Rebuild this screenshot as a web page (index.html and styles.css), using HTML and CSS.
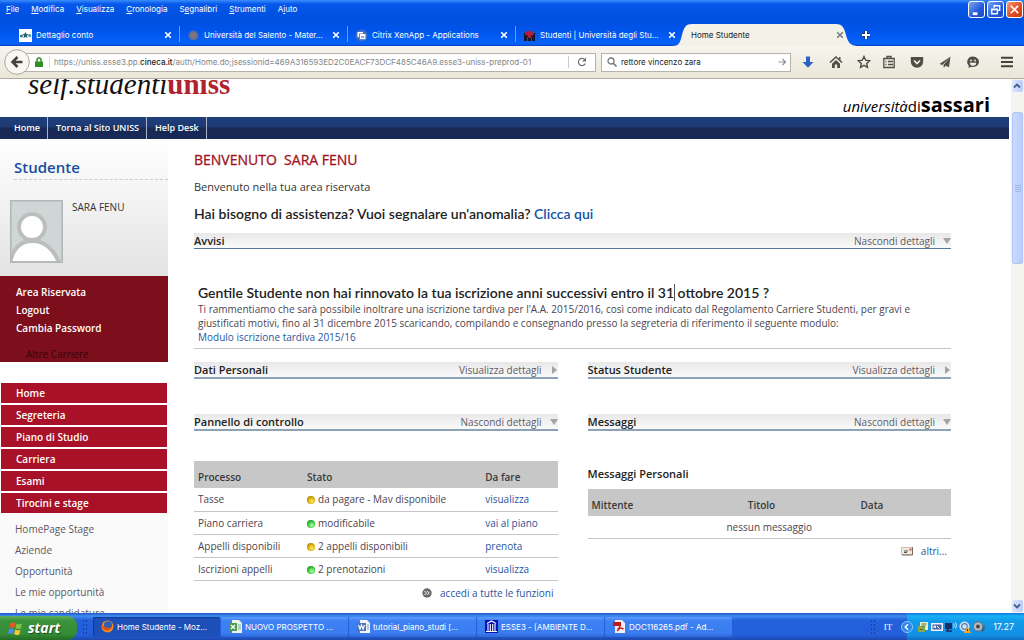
FILE: index.html
```html
<!DOCTYPE html>
<html lang="it">
<head>
<meta charset="utf-8">
<title>Home Studente</title>
<link rel="stylesheet" href="styles.css">
</head>
<body>
<header class="browser">
  <div class="menubar">
    <nav class="menus">
      <button><u>F</u>ile</button><button><u>M</u>odifica</button><button><u>V</u>isualizza</button><button><u>C</u>ronologia</button><button>S<u>e</u>gnalibri</button><button><u>S</u>trumenti</button><button>A<u>i</u>uto</button>
    </nav>
    <div class="winbtns">
      <button class="winbtn" aria-label="Riduci a icona"><svg viewBox="0 0 16 16"><path d="M4 11h5v3H4z" fill="#fff"/></svg></button>
      <button class="winbtn" aria-label="Ripristina"><svg viewBox="0 0 16 16"><path d="M6.500 6V4h6v5h-2M4 7.500h6v5H4zM4 8h6" fill="none" stroke="#fff" stroke-width="1.400"/></svg></button>
      <button class="winbtn winbtn-close" aria-label="Chiudi"><svg viewBox="0 0 16 16"><path d="M4 4l8 8M12 4l-8 8" stroke="#fff" stroke-width="1.800"/></svg></button>
    </div>
  </div>
  <div class="tabs">
    <div class="tab">
      <svg class="fav" viewBox="0 0 13 13"><path d="M0 0h13v13H0z" fill="#fff"/><circle cx="2.500" cy="7" r="1.500" fill="#378"/><path d="M6.500 3l1 2 2 .3-1.500 1.500.4 2.200-1.900-1-1.900 1 .4-2.200L3.500 5.300l2-.3z" fill="#255f78"/><circle cx="10.700" cy="6.500" r="1.500" fill="#499"/></svg>
      <span class="tab-title">Dettaglio conto</span><button class="x" aria-label="Chiudi scheda"><svg viewBox="0 0 8 8"><path d="M1.200 1.200l5.600 5.600M6.800 1.200L1.200 6.800"/></svg></button>
    </div>
    <div class="tab">
      <svg class="fav" viewBox="0 0 13 13"><circle cx="6.500" cy="6.500" r="5" fill="#5b6b9c"/><circle cx="6.500" cy="6.500" r="3.300" fill="#7f7480"/></svg>
      <span class="tab-title">Università del Salento - Mater...</span><button class="x" aria-label="Chiudi scheda"><svg viewBox="0 0 8 8"><path d="M1.200 1.200l5.600 5.600M6.800 1.200L1.200 6.800"/></svg></button>
    </div>
    <div class="tab">
      <svg class="fav" viewBox="0 0 13 13"><circle cx="6.500" cy="6.500" r="6" fill="#3f6cc4"/><path d="M2.500 3h5.500v1.500H4V8H2.500z" fill="#fff"/><path d="M4.800 5h5.700v5.200H4.800z" fill="#fff"/><path d="M6 7h3.300v2H6z" fill="#8fb0e8"/></svg>
      <span class="tab-title">Citrix XenApp - Applications</span><button class="x" aria-label="Chiudi scheda"><svg viewBox="0 0 8 8"><path d="M1.200 1.200l5.600 5.600M6.800 1.200L1.200 6.800"/></svg></button>
    </div>
    <div class="tab">
      <svg class="fav" viewBox="0 0 13 13"><path d="M1 4h11v8H1z" fill="#14172c"/><path d="M2 4l2-2 1 1 1.500-3L8 3l1-1 2 2-1 3-1.500-1-1 3h-2l-1-3L3 7z" fill="#b02038"/><path d="M4 8h1v4H4zM8 8h1v4H8z" fill="#424a70"/></svg>
      <span class="tab-title">Studenti | Università degli Stu...</span><button class="x" aria-label="Chiudi scheda"><svg viewBox="0 0 8 8"><path d="M1.200 1.200l5.600 5.600M6.800 1.200L1.200 6.800"/></svg></button>
    </div>
    <div class="tab tab-active">
      <svg class="tab-shape" viewBox="0 0 190 22" preserveAspectRatio="none"><path d="M0 22C7 22 8 19 10 11S14 0 20 0H164C171 0 172 4 174 11S178 22 186 22z" fill="#f3f1e8"/></svg>
      <span class="tab-title">Home Studente</span><button class="x" aria-label="Chiudi scheda"><svg viewBox="0 0 8 8"><path d="M1.200 1.200l5.600 5.600M6.800 1.200L1.200 6.800"/></svg></button>
    </div>
    <button class="newtab" aria-label="Nuova scheda"><svg viewBox="0 0 10 10"><path d="M5 1v8M1 5h8" stroke="#234" stroke-width="3.500"/><path d="M5 1v8M1 5h8" stroke="#fff" stroke-width="2"/></svg></button>
  </div>
  <div class="toolbar">
    <button class="back" aria-label="Indietro"><svg viewBox="0 0 26 26"><circle cx="13" cy="13" r="12.300" fill="#f8f7f2" stroke="#a9a79b"/><path d="M18.500 13H9M13.500 8L8.500 13l5 5" fill="none" stroke="#45443c" stroke-width="2.600"/></svg></button>
    <div class="urlbar">
      <svg class="lock" viewBox="0 0 8 10"><path d="M2 5V3a2 2 0 0 1 4 0v2" fill="none" stroke="#2f8f22" stroke-width="1.500"/><path d="M0 4.500h8V10H0z" fill="#2f8f22"/></svg>
      <div class="url" role="textbox" contenteditable="true" spellcheck="false" aria-label="Indirizzo">https://uniss.esse3.pp.<b>cineca.it</b>/auth/Home.do;jsessionid=469A316593ED2C0EACF73DCF485C46A9.esse3-uniss-preprod-01</div>
      <button class="reload" aria-label="Ricarica"><svg viewBox="0 0 10 10"><path d="M8.300 6.500A3.600 3.600 0 1 1 7.800 2.600" fill="none" stroke="#6e6e6e" stroke-width="1.200"/><path d="M9 .5v4H5z" fill="#6e6e6e"/></svg></button>
    </div>
    <label class="search">
      <svg viewBox="0 0 10 10"><circle cx="4" cy="4" r="3" fill="none" stroke="#777" stroke-width="1.300"/><path d="M6.200 6.200L9.500 9.500" stroke="#777" stroke-width="1.600"/></svg>
      <input type="text" value="rettore vincenzo zara" aria-label="Cerca">
      <svg viewBox="0 0 10 10"><path d="M1.500 5h7M5.500 2l3 3-3 3" fill="none" stroke="#8a93a5" stroke-width="1.200"/></svg>
    </label>
    <div class="tools">
      <button class="tool" aria-label="Download"><svg viewBox="0 0 14 14"><path d="M5 1.500h4V7h3.500L7 12.700 1.500 7H5z" fill="#2f62c8"/></svg></button>
      <button class="tool" aria-label="Pagina iniziale"><svg viewBox="0 0 14 14"><path d="M1 7.500l6-5.500 6 5.500" fill="none" stroke="#504f46" stroke-width="1.500"/><path d="M3 8.800l4-3.700 4 3.700V13H8.200V9.500H5.800V13H3zM10 2h1.500v3L10 4z" fill="#504f46"/></svg></button>
      <button class="tool" aria-label="Aggiungi ai segnalibri"><svg viewBox="0 0 14 14"><path d="M7 1.500l1.700 3.700 4 .5-3 2.700.8 4L7 10.400l-3.500 2 .8-4-3-2.700 4-.5z" fill="none" stroke="#504f46" stroke-width="1.400"/></svg></button>
      <button class="tool tool-split" aria-label="Segnalibri"><svg viewBox="0 0 14 14"><path d="M1.800 3.500h10.400v9H1.800zM5 3.500v-2h4v2M3.500 6.500h1M6 6.500h5M3.500 9.500h1M6 9.500h5" fill="none" stroke="#504f46" stroke-width="1.300"/></svg></button>
      <button class="tool" aria-label="Pocket"><svg viewBox="0 0 14 14"><path d="M.8 2h12.400v4.500a6.200 6.200 0 0 1-12.400 0z" fill="#504f46"/><path d="M4 5.500l3 3 3-3" fill="none" stroke="#f2f0e6" stroke-width="1.600"/></svg></button>
      <button class="tool" aria-label="Condividi"><svg viewBox="0 0 14 14"><path d="M12.500 1.500L1.500 9l3 1zM12.500 1.500L5.500 10l.3 3 1.700-2.200 3.500 1.400z" fill="#504f46"/></svg></button>
      <button class="tool" aria-label="Hello"><svg viewBox="0 0 14 14"><path d="M7 1.500a6 5.300 0 1 1-2 10.300L2.500 13l.3-2.300A5.400 5.400 0 0 1 7 1.500z" fill="#504f46"/><circle cx="5" cy="5.500" r=".9" fill="#eee"/><circle cx="9" cy="5.500" r=".9" fill="#eee"/><path d="M3.800 7.800h6.400a3.200 3 0 0 1-6.400 0z" fill="#eee"/></svg></button>
      <button class="tool tool-menu" aria-label="Menu"><svg viewBox="0 0 14 14"><path d="M1 2.800h12M1 7h12M1 11.200h12" stroke="#45443c" stroke-width="2"/></svg></button>
    </div>
  </div>
</header>

<div class="viewport">
  <div class="page">
    <div class="banner">
      <div class="logo">self.studenti<b>uniss</b></div>
      <div class="uni"><i>università</i>di<b>sassari</b></div>
    </div>
    <nav class="topnav"><a href="#">Home</a><a href="#">Torna al Sito UNISS</a><a href="#">Help Desk</a></nav>
    <div class="columns">
      <aside class="sidebar">
        <section class="profile">
          <h2>Studente</h2>
          <div class="who">
            <svg class="avatar" viewBox="0 0 53 63"><path d="M0 0h53v63H0z" fill="#d0d5d6"/><circle cx="22" cy="27" r="13" fill="#fff" stroke="#bcbebe" stroke-width="4"/><path d="M0 63C3 47 12 41 23 41s21 8 26 22z" fill="#fff" stroke="#bcbebe" stroke-width="4"/><path d="M.8.800h51.400v61.400H.8z" fill="none" stroke="#b4b7b7" stroke-width="1.600"/></svg>
            <span>SARA FENU</span>
          </div>
        </section>
        <nav class="account"><a href="#">Area Riservata</a><a href="#">Logout</a><a href="#">Cambia Password</a><a class="career" href="#">Altre Carriere</a></nav>
        <nav class="sections"><a href="#">Home</a><a href="#">Segreteria</a><a href="#">Piano di Studio</a><a href="#">Carriera</a><a href="#">Esami</a><a href="#">Tirocini e stage</a></nav>
        <nav class="sub"><a href="#">HomePage Stage</a><a href="#">Aziende</a><a href="#">Opportunità</a><a href="#">Le mie opportunità</a><a href="#">Le mie candidature</a></nav>
      </aside>
      <main class="main">
        <h1>BENVENUTO&nbsp; SARA FENU</h1>
        <p class="welcome">Benvenuto nella tua area riservata</p>
        <p class="help">Hai bisogno di assistenza? Vuoi segnalare un'anomalia? <a href="#">Clicca qui</a></p>
        <div class="bar bar-thin"><h3>Avvisi</h3><a href="#">Nascondi dettagli <svg viewBox="0 0 8 8"><path d="M0 1h8L4 7z"/></svg></a></div>
        <article class="notice">
          <h4>Gentile Studente non hai rinnovato la tua iscrizione anni successivi entro il 31<span class="caret"></span> ottobre 2015 ?</h4>
          <p>Ti rammentiamo che sarà possibile inoltrare una iscrizione tardiva per l'A.A. 2015/2016, così come indicato dal Regolamento Carriere Studenti, per gravi e giustificati motivi, fino al 31 dicembre 2015 scaricando, compilando e consegnando presso la segreteria di riferimento il seguente modulo:</p>
          <a href="#">Modulo iscrizione tardiva 2015/16</a>
        </article>
        <div class="panels">
          <section>
            <div class="bar"><h3>Dati Personali</h3><a href="#">Visualizza dettagli <svg viewBox="0 0 8 8"><path d="M2 0v8l5-4z"/></svg></a></div>
            <div class="bar"><h3>Pannello di controllo</h3><a href="#">Nascondi dettagli <svg viewBox="0 0 8 8"><path d="M0 1h8L4 7z"/></svg></a></div>
            <table class="grid process">
              <thead><tr><th>Processo</th><th>Stato</th><th>Da fare</th></tr></thead>
              <tbody>
                <tr><td>Tasse</td><td><i class="dot amber"></i>da pagare - Mav disponibile</td><td><a href="#">visualizza</a></td></tr>
                <tr><td>Piano carriera</td><td><i class="dot green"></i>modificabile</td><td><a href="#">vai al piano</a></td></tr>
                <tr><td>Appelli disponibili</td><td><i class="dot amber"></i>2 appelli disponibili</td><td><a href="#">prenota</a></td></tr>
                <tr><td>Iscrizioni appelli</td><td><i class="dot green"></i>2 prenotazioni</td><td><a href="#">visualizza</a></td></tr>
              </tbody>
            </table>
            <div class="more"><svg viewBox="0 0 10 10"><circle cx="5" cy="5" r="4.700" fill="#6b6b6b"/><path d="M2.500 3L4.500 5l-2 2M5.200 3l2 2-2 2" fill="none" stroke="#fff"/></svg><a href="#">accedi a tutte le funzioni</a></div>
          </section>
          <section>
            <div class="bar"><h3>Status Studente</h3><a href="#">Visualizza dettagli <svg viewBox="0 0 8 8"><path d="M2 0v8l5-4z"/></svg></a></div>
            <div class="bar"><h3>Messaggi</h3><a href="#">Nascondi dettagli <svg viewBox="0 0 8 8"><path d="M0 1h8L4 7z"/></svg></a></div>
            <h3 class="subtitle">Messaggi Personali</h3>
            <table class="grid messages">
              <thead><tr><th>Mittente</th><th>Titolo</th><th>Data</th></tr></thead>
              <tbody><tr><td colspan="3" class="empty">nessun messaggio</td></tr></tbody>
            </table>
            <div class="more"><svg class="mail" viewBox="0 0 12 10"><path d="M.5 1.500h11v7H.5z" fill="#efe9df" stroke="#c9c0b2"/><path d="M11.500 1v8H1" fill="none" stroke="#7a6a60"/><path d="M3 5h4M3 6.500h3" stroke="#555"/><path d="M8.500 2.500h2v2h-2z" fill="#c45a4a"/></svg><a href="#">altri...</a></div>
          </section>
        </div>
      </main>
    </div>
  </div>
  <div class="scroll">
    <button aria-label="Su"><svg viewBox="0 0 10 10"><path d="M2 6.500l3-3 3 3" fill="none" stroke="#42608f" stroke-width="1.800"/></svg></button>
    <div class="track"><div class="thumb"><svg viewBox="0 0 6 7"><path d="M0 .5h6M0 2.500h6M0 4.500h6M0 6.500h6" stroke="#9db6ec"/></svg></div></div>
    <button aria-label="Giù"><svg viewBox="0 0 10 10"><path d="M2 3.500l3 3 3-3" fill="none" stroke="#42608f" stroke-width="1.800"/></svg></button>
  </div>
</div>

<footer class="taskbar">
  <button class="start"><svg viewBox="0 0 16 15"><path d="M2.500 2.500C4.500 1 6 1.500 7.500 2.200L6.300 7C5 6 3.300 6 1.300 7z" fill="#e8582a"/><path d="M8.500 2.600c2 1 3.500.8 5.500-.1L12.800 7.500c-2 .9-3.600.6-5.300-.3z" fill="#7fc142"/><path d="M1 8.200c2-1 3.600-.8 5.200.1L5 13c-1.500-1-3.200-1-5 0z" fill="#4a8df0"/><path d="M7.200 8.500c1.600 1 3.300 1 5.300.2l-1.200 4.700c-2 1-3.600.6-5.200-.3z" fill="#f8c832"/></svg>start</button>
  <span class="grip"></span>
  <button class="task task-active"><svg viewBox="0 0 13 13"><circle cx="6.500" cy="6.500" r="6" fill="#f08a1c"/><circle cx="7" cy="5.200" r="4" fill="#2b5fb5"/><path d="M1 4c1 3 3 2.500 5 3.500s3 0 4-1c0 3-2 4-4 4S1 9 1 4z" fill="#e0501a"/></svg><span>Home Studente - Moz...</span></button>
  <button class="task"><svg viewBox="0 0 13 13"><path d="M3 0h7l3 3v10H3z" fill="#eef3ee"/><path d="M0 3h8v8H0z" fill="#4a9a50"/><path d="M2 5l4 4M6 5L2 9" stroke="#fff" stroke-width="1.300"/><path d="M9 5h3M9 7h3M9 9h3" stroke="#7a9"/></svg><span>NUOVO PROSPETTO ...</span></button>
  <button class="task"><svg viewBox="0 0 13 13"><path d="M3 0h7l3 3v10H3z" fill="#f4f6fb"/><path d="M0 3h9v8H0z" fill="#4a72b8"/><path d="M1.500 5l1.500 4 1.500-4L6 9l1.500-4" fill="none" stroke="#fff" stroke-width="1.200"/><path d="M10 5h2M10 7h2M10 9h2" stroke="#79b"/></svg><span>tutorial_piano_studi [...</span></button>
  <button class="task"><svg viewBox="0 0 13 13"><path d="M0 0h13v13H0z" fill="#0510b8"/><path d="M2 3.500L6.500 1 11 3.500M1 11.500h11M3 4v7M5.300 4v7M7.700 4v7M10 4v7" fill="none" stroke="#fff" stroke-width="1.100"/></svg><span>ESSE3 - [AMBIENTE D...</span></button>
  <button class="task"><svg viewBox="0 0 13 13"><path d="M2 0h7l3 3v10H2z" fill="#f6efef"/><path d="M0 2h8v4H0z" fill="#c21a1a"/><path d="M4 11c3-2 3-5 2.500-6.500M4.500 9c2-1.500 4-1 6 0" fill="none" stroke="#c21a1a" stroke-width="1.500"/></svg><span>DOC116265.pdf - Ad...</span></button>
  <span class="grip grip-end"></span>
  <span class="lang">IT</span>
  <div class="tray">
    <button class="expand" aria-label="Mostra icone nascoste"><svg viewBox="0 0 12 12"><circle cx="6" cy="6" r="5.500" fill="#2c86ea" stroke="#8cc8ff"/><path d="M7 3.200L4.300 6 7 8.800" fill="none" stroke="#fff" stroke-width="1.500"/></svg></button>
    <svg viewBox="0 0 12 12"><path d="M3 1h8v8H3z" fill="#e7edc4"/><path d="M1 5h7v6H1z" fill="#8ba94c"/><path d="M4.500 3h5M4.500 5h4M2.500 8.500h4" stroke="#58783c"/></svg>
    <svg viewBox="0 0 12 12"><path d="M0 2h12v8H0z" fill="#eef2fa"/><path d="M1.500 3.500h9v5h-9z" fill="#4b669e"/><path d="M3 7V5h1.500v2M6 5l2.500 2.500" fill="none" stroke="#fff"/></svg>
    <svg viewBox="0 0 12 12"><path d="M0 2h7v6H0z" fill="#1b2d66"/><path d="M1 10h6M3 8v2" stroke="#1b2d66" stroke-width="1.500"/><path d="M8.500 2.500q1.500 2 0 4M10.500 1.500q2 3 0 6" fill="none" stroke="#c9e4ff"/></svg>
    <svg viewBox="0 0 12 12"><circle cx="5.500" cy="5.500" r="5" fill="#cfe3f6"/><circle cx="5.500" cy="5.500" r="2.800" fill="none" stroke="#4e7fae" stroke-width="1.200"/><path d="M8.500 5.500L12 12H5z" fill="#f6a81c"/><path d="M8.500 8v2" stroke="#503000"/></svg>
    <svg viewBox="0 0 12 12"><circle cx="5" cy="5.500" r="4.600" fill="#b9bcc2" stroke="#666b75"/><circle cx="5" cy="5.500" r="2" fill="#42464f"/><path d="M9 10.500q2.500-2 2-6" fill="none" stroke="#505560" stroke-width="1.300"/></svg>
    <time>17.27</time>
  </div>
</footer>
</body>
</html>
```
FILE: styles.css
```css
* { box-sizing: border-box; }
html, body { height: 100%; }
body {
  margin: 0;
  display: flex;
  flex-direction: column;
  height: 100vh;
  overflow: hidden;
  background: #fff;
  font: 10px/14px "Open Sans", "Noto Sans", sans-serif;
  color: #4c4450;
}
h1, h2, h3, h4, p { margin: 0; }
a { text-decoration: none; color: #2a559f; }
button { border: 0; padding: 0; margin: 0; background: none; color: inherit; font: inherit; }
svg { display: block; flex: none; }

/* browser chrome */
.browser, .taskbar { font-family: Inter, "Noto Sans", sans-serif; font-size: 8px; line-height: 12px; }
.browser {
  flex: none;
  color: #fff;
  background: linear-gradient(#3a8cff, #0558ea 4px, #0050e0 20px, #0054ea 30px, #0663fb 44px, #0a3fb8 46px);
}
.menubar { display: flex; justify-content: space-between; height: 24px; padding: 1px 1px 0 6px; }
.menus { display: flex; gap: 12px; padding-top: 1px; height: 14px; }
.winbtns { display: flex; gap: 2px; }
.winbtn {
  width: 17px; height: 17px;
  border: 1px solid #fff; border-radius: 3px;
  background: linear-gradient(135deg, #7da6f5, #2358d8 60%, #1c4cc4);
}
.winbtn-close { background: linear-gradient(135deg, #f09a7a, #dd4a22 60%, #c43a12); }
.tabs { display: flex; height: 22px; padding-left: 12px; align-items: stretch; }
.tab {
  position: relative;
  flex: 0 1 168px;
  display: flex;
  align-items: center;
  gap: 4px;
  padding: 0 8px 0 7px;
  min-width: 0;
}
.tab:not(.tab-active)::after { content: ""; position: absolute; right: 0; top: 2px; bottom: 4px; border-right: 1px solid #5c9bff; }
.tab:nth-child(4)::after { display: none; }
.fav { width: 13px; height: 13px; }
.tab-title { flex: 1; white-space: nowrap; overflow: hidden; position: relative; }
.x { width: 8px; height: 8px; position: relative; }
.x svg { width: 8px; height: 8px; fill: none; stroke: #fff; stroke-width: 1.6px; }
.tab-active { color: #222; }
.tab-active .x svg { stroke: #7b7b7b; }
.tab-shape { position: absolute; left: -12px; top: 0; width: calc(100% + 22px); height: 100%; }
.newtab { margin-left: 9px; }
.newtab svg { width: 10px; height: 10px; }
.toolbar {
  display: flex;
  align-items: center;
  height: 33px;
  padding: 0 10px 0 4px;
  background: linear-gradient(#f6f5ef, #eae7d8);
  border-bottom: 1px solid #b1ae9f;
  color: #222;
}
.back { width: 26px; height: 26px; z-index: 1; }
.back svg { width: 26px; height: 26px; }
.urlbar, .search { display: flex; align-items: center; height: 19px; background: #fff; border: 1px solid #b5b3a8; }
.urlbar { flex: 575 1 0; min-width: 0; margin-left: -6px; padding-left: 10px; }
.lock { width: 8px; height: 10px; }
.url { flex: 1; min-width: 0; margin-left: 6px; padding-left: 4px; border-left: 1px solid #ddd; white-space: nowrap; overflow: hidden; color: #858585; }
.url b { color: #222; font-weight: 500; }
.reload { padding: 1px 8px; border-left: 1px solid #ccc; }
.reload svg, .search svg { width: 10px; height: 10px; }
.search { flex: 185 1 0; min-width: 0; margin-left: 5px; padding: 0 3px 0 5px; gap: 4px; }
.search input { flex: 1; min-width: 0; border: 0; padding: 0; background: none; font: inherit; color: #222; outline: 0; }
.tools { display: flex; align-items: center; gap: 14px; margin-left: 10px; }
.tool { width: 14px; height: 14px; }
.tool svg { width: 14px; height: 14px; }
.tool-split { margin-left: -3px; }
.tool-menu { margin-left: 6px; }

/* page area */
.viewport { flex: 1; min-height: 0; display: flex; }
.page { flex: 1; min-width: 0; overflow: hidden; }
.banner { display: flex; justify-content: space-between; align-items: flex-end; height: 38px; padding: 0 21px 0 28px; overflow: hidden; color: #111; }
.logo { font: italic 29px/32px "Liberation Serif", serif; padding-bottom: 17px; white-space: nowrap; }
.logo b { font-style: normal; color: #b0222e; }
.uni { font-size: 15px; line-height: 22px; white-space: nowrap; color: #000; }
.uni b { font-size: 20px; }
.topnav {
  display: flex;
  height: 22px;
  margin-right: 2px;
  background: linear-gradient(#1f3f7c, #1c3971 45%, #172954 50%, #172954);
  font-size: 9px; font-weight: 600; line-height: 22px;
}
.topnav a { color: #fff; padding: 0 7px 0 8px; border-right: 1px solid #aab3c8; }
.topnav a:first-child { padding-left: 14px; }
.columns { display: flex; align-items: flex-start; }
.sidebar { flex: none; width: 168px; font-weight: 600; }
.profile { height: 137px; padding: 17px 0 0 14px; background: linear-gradient(#fff, #e3e3e3); }
.profile h2 { font-size: 15px; line-height: 22px; font-weight: 600; color: #164ea0; padding-bottom: 1px; border-bottom: 1px dashed #ccc; }
.who { display: flex; gap: 9px; margin: 20px 0 0 -4px; font-weight: 400; color: #333; }
.avatar { width: 53px; height: 63px; }
.account { display: flex; flex-direction: column; gap: 4px; height: 86px; padding: 9px 16px 0; background: #7d0e1b; overflow: hidden; }
.account a { color: #fff; }
.account .career { margin: 8px 0 0 10px; color: #3a0509; font-weight: 400; }
.sections { display: flex; flex-direction: column; gap: 2px; margin-top: 21px; padding: 0 1px; }
.sections a { color: #fff; background: #a81127; line-height: 20px; padding-left: 15px; }
.sub { display: flex; flex-direction: column; background: #fafafa; padding: 6px 15px; }
.sub a { color: #5a5664; font-weight: 400; line-height: 21px; }
.main { flex: 1; min-width: 0; padding: 12px 60px 0 26px; }
.main h1 { font-size: 14px; line-height: 18px; font-weight: 400; color: #a01022; white-space: nowrap; -webkit-text-stroke: 0.3px; }
.welcome { font-size: 11px; line-height: 16px; margin-top: 10px; color: #333; }
.help, .notice h4 { font-family: Lato, "Open Sans", sans-serif; font-size: 14px; line-height: 18px; font-weight: 600; color: #222; }
.help { margin-top: 10px; }
.help a { color: #0f55a8; }
.bar {
  display: flex;
  justify-content: space-between;
  align-items: center;
  height: 17px;
  background: linear-gradient(#e8e8e8, #fafafa);
  border-bottom: 2px solid #8ea2b5;
}
.bar h3, .subtitle { font-size: 11px; line-height: 15px; font-weight: 600; color: #222; }
.bar a { display: flex; align-items: center; gap: 8px; color: #5f5a64; }
.bar svg { width: 8px; height: 8px; fill: #a3a3a3; }
.bar-thin { height: 16px; margin-top: 10px; border-bottom: 1px solid #55749a; }
.notice { margin-top: 35px; padding: 0 4px 4px; border-bottom: 1px solid #c4c4c8; }
.caret { position: relative; }
.caret::after { content: ""; position: absolute; left: 0; top: 0; height: 17px; border-left: 1px solid #555; }
.panels { display: grid; grid-template-columns: 1fr 1fr; gap: 30px; margin-top: 13px; }
.panels .bar + .bar { margin-top: 35px; }
.grid { width: 100%; border-collapse: collapse; table-layout: fixed; }
.grid th { height: 27px; padding: 4px 4px 0; text-align: left; background: #c7c7c7; color: #3a3a3a; font-weight: 600; }
.grid td { height: 23px; padding: 0 4px; border-bottom: 1px solid #c4c4c8; }
.process { margin-top: 30px; }
.process th:first-child { width: 30%; }
.process th:last-child { width: 21%; }
.dot { display: inline-block; width: 8px; height: 8px; margin-right: 3px; border-radius: 50%; vertical-align: -1px; }
.amber { background: radial-gradient(circle at 60% 65%, #ffe870, #d6a800 55%, #6b5000); }
.green { background: radial-gradient(circle at 60% 65%, #b6ffb0, #2fc030 55%, #0f6010); }
.more { display: flex; justify-content: flex-end; align-items: center; gap: 8px; margin-top: 5px; padding-right: 4px; }
.more svg { width: 10px; height: 10px; }
.more .mail { width: 12px; }
.subtitle { margin: 35px 0 8px; }
.messages th:first-child { width: 43%; }
.messages th:last-child { width: 26%; }
.grid .empty { height: 22px; text-align: center; }

/* scrollbar */
.scroll { flex: none; width: 13px; display: flex; flex-direction: column; padding: 1px 1px; background: #f5f4ee; }
.scroll button { height: 12px; border-radius: 2px; background: linear-gradient(90deg, #dce6ff, #b9cbf7); }
.scroll button svg { width: 10px; height: 10px; }
.track { flex: 1; }
.thumb {
  height: 30%; margin-top: 20px;
  display: flex; align-items: center; justify-content: center;
  border: 1px solid #b0c4f5; border-radius: 2px;
  background: linear-gradient(90deg, #cbdafe, #b9ccfb);
}
.thumb svg { width: 6px; height: 7px; }

/* taskbar */
.taskbar {
  flex: none;
  display: flex;
  align-items: center;
  height: 27px;
  color: #fff;
  background: linear-gradient(#1f57c4, #3f8cf3 3px, #2461dc 7px, #245edb 22px, #1c49ae);
}
.start {
  display: flex; align-items: center; gap: 4px;
  width: 77px; height: 24px; padding-left: 8px; align-self: flex-end;
  border-radius: 0 9px 9px 0;
  background: linear-gradient(#5fae5c, #3a923a 20%, #358d35 75%, #236b25);
  font: italic bold 14px/20px "Open Sans", "Noto Sans", sans-serif;
  text-shadow: 1px 1px 1px #1d4d1d;
}
.start svg { width: 16px; height: 15px; }
.grip { width: 5px; height: 16px; margin: 0 6px 0 5px; background: radial-gradient(circle, #163f9e 1px, transparent 1px) 0 0 / 3px 4px; }
.task {
  flex: 0 1 127px;
  min-width: 0;
  display: flex; align-items: center; gap: 3px;
  height: 20px; margin-right: 1px; padding-left: 8px;
  border-radius: 2px;
  background: linear-gradient(#5c9bff, #3c81f3 20%, #3a7df0 80%, #2e69d8);
  white-space: nowrap;
}
.task span { overflow: hidden; }
.task svg { width: 13px; height: 13px; }
.task-active { background: #1d4fb8; box-shadow: inset 1px 1px 1px #123a90; }
.grip-end { margin-left: auto; }
.lang { font: 9px/12px "Liberation Serif", serif; padding: 0 15px 0 3px; }
.tray {
  display: flex; align-items: center; gap: 2px;
  align-self: stretch; padding-right: 10px;
  background: linear-gradient(#1277d8, #19b0f5 3px, #129bea 8px, #1290e6 22px, #0f70c0);
}
.tray svg { width: 12px; height: 12px; }
.expand { margin-left: -6px; margin-right: 2px; }
.tray time { margin-left: 6px; font-size: 9px; }
```
